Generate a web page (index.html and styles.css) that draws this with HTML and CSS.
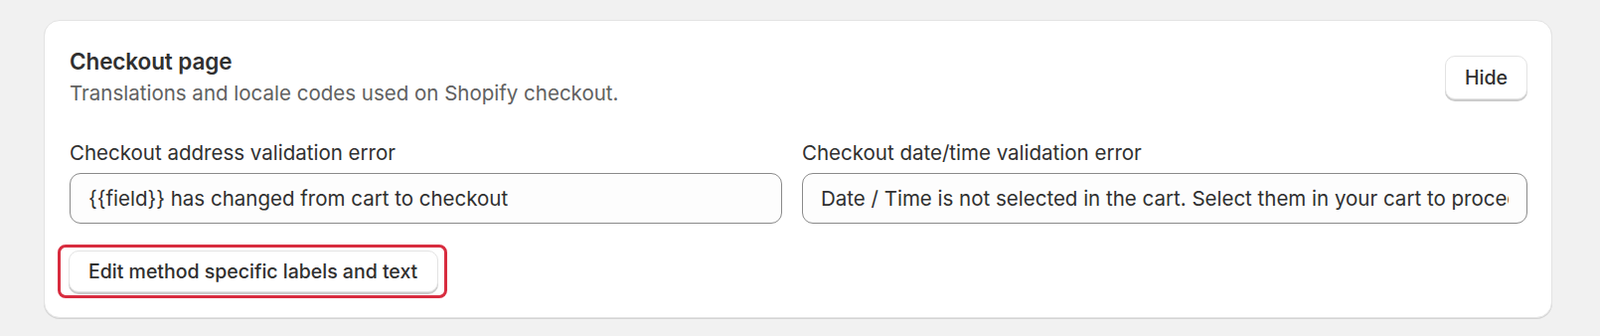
FILE: index.html
```html
<!DOCTYPE html>
<html lang="en">
<head>
    <meta charset="UTF-8">
    <meta name="viewport" content="width=device-width, initial-scale=1.0">
    <title>Checkout page</title>
    <link rel="stylesheet" href="styles.css">
</head>
<body>
    <div class="card">
        <div class="card-header">
            <div class="card-heading">
                <h2 class="card-title">Checkout page</h2>
                <p class="card-subtitle">Translations and locale codes used on Shopify checkout.</p>
            </div>
            <button class="btn btn-hide">Hide</button>
        </div>

        <div class="fields">
            <div class="field">
                <label class="field-label" for="addressError">Checkout address validation error</label>
                <input class="field-input" id="addressError" type="text" value="{{field}} has changed from cart to checkout">
            </div>
            <div class="field">
                <label class="field-label" for="dateError">Checkout date/time validation error</label>
                <input class="field-input" id="dateError" type="text" value="Date / Time is not selected in the cart. Select them in your cart to proceed to checkout.">
            </div>
        </div>

        <div class="card-actions">
            <div class="highlight">
                <button class="btn">Edit method specific labels and text</button>
            </div>
        </div>
    </div>
</body>
</html>
```

FILE: styles.css
```css
* {
    margin: 0;
    padding: 0;
    box-sizing: border-box;
}

body {
    font-family: 'Inter', 'Noto Sans', sans-serif;
    background: #f1f1f1;
    color: #303030;
    padding: 20px 48px 18px 44px;
}

.card {
    background: #ffffff;
    border: 1px solid #e3e3e3;
    border-radius: 16px;
    box-shadow: 0 1px 0 #d4d4d4;
    padding: 26px 24px 19px 25px;
}

.card-header {
    display: flex;
    align-items: center;
    justify-content: space-between;
}

.card-title {
    font-size: 22.5px;
    font-weight: 600;
    line-height: 30px;
    letter-spacing: -0.1px;
}

.card-subtitle {
    margin-top: 3px;
    font-size: 20.5px;
    line-height: 28px;
    color: #616161;
}

.fields {
    display: grid;
    grid-template-columns: 717fr 730fr;
    gap: 20px;
    margin-top: 33px;
}

.field-label {
    display: block;
    font-size: 20.5px;
    line-height: 26px;
    margin-bottom: 7px;
}

.field-input {
    display: block;
    width: 100%;
    height: 51px;
    padding: 0 18px;
    font-family: inherit;
    font-size: 20.5px;
    color: #303030;
    background: #fdfdfd;
    border: 1px solid #8a8a8a;
    border-radius: 11px;
    outline: none;
}

.card-actions {
    display: flex;
    margin-top: 21px;
}

.highlight {
    border: 3px solid #d82c3f;
    border-radius: 8px;
    padding: 3px 6px 3px 8px;
    margin-left: -12px;
}

.btn {
    display: block;
    font-family: inherit;
    font-size: 19.5px;
    font-weight: 500;
    color: #303030;
    background: #ffffff;
    border: 1px solid #e3e3e3;
    border-radius: 10px;
    box-shadow: 0 2px 0 #cccccc;
    padding: 0 19px 0 19px;
    height: 42px;
    cursor: pointer;
}

.card-actions .btn {
    padding: 0 20px 0 19px;
}

.btn-hide {
    height: 44px;
    padding: 0 19px;
}
```
